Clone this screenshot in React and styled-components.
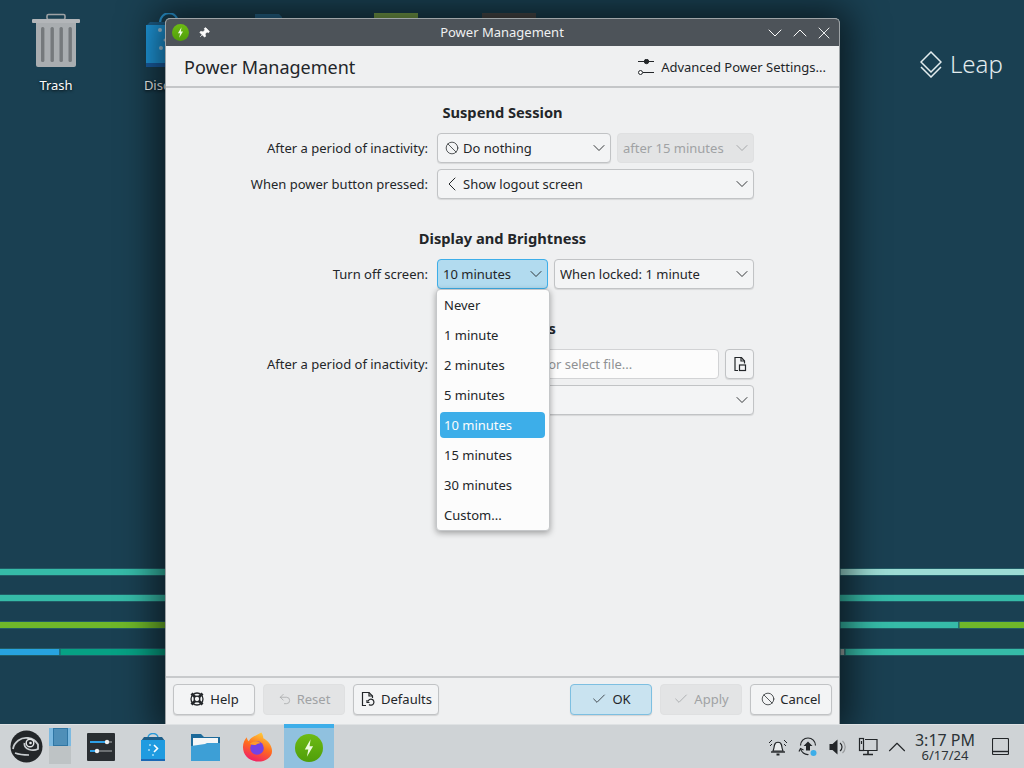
import React from "react";
import styled, { createGlobalStyle } from "styled-components";
import { Ban, Check, ChevronDown, ChevronLeft, ChevronUp, Undo2, X, Pin } from "lucide-react";

const Global = createGlobalStyle`
  html, body { margin: 0; padding: 0; width: 1024px; height: 768px; overflow: hidden; }
  body { font-family: "Noto Sans", sans-serif; font-size: 13px; color: #232629; }
  * { box-sizing: border-box; }
`;

const Screen = styled.div`
  width: 1024px; height: 768px; display: flex; flex-direction: column; overflow: hidden;
`;
const Desktop = styled.div`
  position: relative; flex: 1; background: #1a4052; overflow: hidden;
`;
const Wallpaper = styled.svg`
  position: absolute; left: 0; top: 0;
`;
const DeskIcon = styled.div`
  position: absolute; left: ${p => p.$x}px; top: ${p => p.$y}px; width: 90px;
  display: flex; flex-direction: column; align-items: center;
`;
const DeskLabel = styled.span`
  color: #fcfcfc; font-size: 13px; line-height: 18px; margin-top: 7px;
  text-shadow: 0 1px 3px rgba(0,0,0,.9);
`;
const LeapBrand = styled.div`
  position: absolute; left: 920px; top: 48px; display: flex; align-items: center; gap: 8px;
  color: #e3ecee; font-size: 24px; line-height: 32px; font-weight: 300;
`;
const Window = styled.div`
  position: absolute; left: 165px; top: 18px; width: 675px; height: 706px;
  display: flex; flex-direction: column; background: #eff0f1;
  border: 1px solid #9ea3a6; border-bottom: 0; border-radius: 5px 5px 0 0;
  box-shadow: 0 0 36px 10px rgba(0,0,0,.58);
`;
const TitleBar = styled.div`
  height: 27px; flex: none; background: #4d5359; color: #eff0f1; display: flex; align-items: center;
  padding: 0 5px 0 6px; position: relative; border-radius: 4px 4px 0 0;
`;
const TitleText = styled.div`
  position: absolute; left: 0; right: 0; text-align: center; font-size: 13px; line-height: 27px; padding-right: 1px;
`;
const TitleLeft = styled.div`
  display: flex; align-items: center; gap: 9px;
`;
const TitleRight = styled.div`
  margin-left: auto; display: flex; align-items: center; gap: 1px; color: #fcfcfc; position: relative;
`;
const CloseIcon = styled(X)`
  margin-left: 1px;
`;
const Header = styled.div`
  height: 42px; flex: none; display: flex; align-items: center; justify-content: space-between;
  padding: 2px 13px 0 18px; border-bottom: 2px solid #c4c6c8;
`;
const PageTitle = styled.h1`
  margin: 0; font-size: 18px; font-weight: 400; color: #232629; line-height: 24px;
`;
const Advanced = styled.div`
  display: flex; align-items: center; gap: 7px; font-size: 13px; color: #232629;
`;
const Body = styled.div`
  flex: 1; padding-top: 14px; position: relative;
`;
const Section = styled.section`
  display: flex; flex-direction: column; gap: 6px; margin-bottom: 29px;
`;
const Heading = styled.h2`
  margin: 0 0 5px; font-size: 14.67px; font-weight: 700; text-align: center; line-height: 20px; color: #232629;
`;
const Row = styled.div`
  display: grid; grid-template-columns: 262px 317px; column-gap: 9px; align-items: center; height: 30px;
`;
const Label = styled.div`
  text-align: right; line-height: 30px; color: #232629;
`;
const Fields = styled.div`
  display: flex; gap: 6px; min-width: 0;
`;
const Combo = styled.div`
  height: 30px; flex: ${p => p.$w ? `0 0 ${p.$w}px` : 1}; display: flex; align-items: center; gap: 4px; padding: 0 1px 0 ${p => p.$pl ?? 7}px;
  border-radius: 4px;
  border: 1px solid ${p => p.$active ? "#3daee9" : p.$off ? "#dfe0e1" : "#c1c3c5"};
  background: ${p => p.$active ? "#b2dbef" : p.$off ? "#e3e4e5" : "#f3f4f5"};
  color: ${p => p.$off ? "#a0a2a4" : "#232629"};
  box-shadow: ${p => p.$off ? "none" : "0 1px 1px rgba(0,0,0,.1)"};
`;
const ComboText = styled.span`
  flex: 1; white-space: nowrap; overflow: hidden; line-height: 18px;
`;
const LeadChevron = styled(ChevronLeft)`
  margin: 0 -5px; flex: none;
`;
const TextInput = styled.div`
  height: 30px; flex: 1; border: 1px solid #d2d3d5; background: #fcfcfc; border-radius: 4px;
  display: flex; align-items: center; padding-left: 9px; color: #8f9193;
`;
const SquareButton = styled.div`
  width: 29px; height: 30px; flex: none; border: 1px solid #c1c3c5; border-radius: 4px; background: #f3f4f5;
  display: flex; align-items: center; justify-content: center; box-shadow: 0 1px 1px rgba(0,0,0,.1);
`;
const Menu = styled.div`
  position: absolute; left: 270px; top: 201px; width: 114px; height: 242px; background: #fcfcfc;
  border: 1px solid #c5c7c9; border-radius: 4px; box-shadow: 0 2px 6px rgba(0,0,0,.35);
  display: flex; flex-direction: column;
`;
const MenuItem = styled.div`
  height: 30px; flex: none; display: flex; align-items: center; padding: 2px 4px 2px 3px;
`;
const MenuInner = styled.div`
  flex: 1; height: 26px; border-radius: 4px; padding-left: 4px; line-height: 26px;
  background: ${p => p.$on ? "#3daee9" : "transparent"};
  color: ${p => p.$on ? "#fcfcfc" : "#232629"};
`;
const Footer = styled.div`
  height: 48px; flex: none; border-top: 2px solid #c8cacc; display: flex; align-items: center;
  justify-content: space-between; padding: 0 7px 4px;
`;
const ButtonGroup = styled.div`
  display: flex; gap: 8px;
`;
const Btn = styled.div`
  height: 31px; width: ${p => p.$w ?? 82}px; display: flex; align-items: center; justify-content: center; gap: 5px;
  border-radius: 4px;
  border: 1px solid ${p => p.$primary ? "#7dbfe1" : p.$off ? "#dfe0e1" : "#c1c3c5"};
  background: ${p => p.$primary ? "#c9e3f0" : p.$off ? "#e3e4e5" : "#f3f4f5"};
  color: ${p => p.$off ? "#a0a2a4" : "#232629"};
  box-shadow: ${p => p.$off ? "none" : "0 1px 1px rgba(0,0,0,.12)"};
`;
const Panel = styled.div`
  height: 44px; flex: none; background: #cfd3d6; border-top: 1px solid #dfe2e4; display: flex; align-items: stretch; position: relative;
`;
const Launcher = styled.div`
  width: 49px; display: flex; align-items: center; justify-content: center; padding-left: 4px;
`;
const Pager = styled.div`
  width: 22px; margin: 3px 0 4px; display: flex; flex-direction: column;
`;
const PagerDesk = styled.div`
  flex: 1; display: flex; justify-content: center;
  background: ${p => p.$on ? "#7cb9e0" : "#bec3c5"};
`;
const PagerWin = styled.div`
  width: 15px; height: 100%; background: #4f8fb8; border: 1px solid #2f76a4;
`;
const Tasks = styled.div`
  display: flex; margin-left: 4px;
`;
const Task = styled.div`
  width: ${p => p.$on ? 50 : 52}px; display: flex; align-items: center; justify-content: center;
  background: ${p => p.$on ? "#90c1df" : "transparent"};
  border-top: ${p => p.$on ? "4px solid #3daee9" : "0"};
  margin: ${p => p.$on ? "-1px 0 0 1px" : "0"};
`;
const Tray = styled.div`
  margin-left: auto; display: flex; align-items: center; color: #232629;
`;
const TrayIcon = styled.div`
  width: ${p => p.$w ?? 30}px; height: 30px; display: flex; align-items: center; justify-content: center; margin-right: ${p => p.$mr ?? 0}px;
`;
const Clock = styled.div`
  width: 68px; margin: 1px 6px 0 0; display: flex; flex-direction: column; align-items: center; color: #2d3338;
`;
const ClockTime = styled.span`
  font-size: 16px; line-height: 16px; white-space: nowrap;
`;
const ClockDate = styled.span`
  font-size: 13px; line-height: 14px; white-space: nowrap;
`;

const Chev = ({ color = "#232629" }) => <ChevronDown size={20} strokeWidth={1.1} color={color} style={{ flex: "none" }} />;

const PowerIcon = ({ size = 24, id }) => (
  <svg width={size} height={size} viewBox="0 0 24 24">
    <defs>
      <linearGradient id={id} x1="0" y1="0" x2="0" y2="1">
        <stop offset="0" stopColor="#6dbb14" />
        <stop offset="1" stopColor="#4f9e0a" />
      </linearGradient>
    </defs>
    <circle cx="12" cy="12" r="12" fill={`url(#${id})`} />
    <path d="M13.4 4.5 8.4 13.2h3l-1.2 6.3 5.3-9h-3z" fill="#eefbe0" />
  </svg>
);

const TrashIcon = () => (
  <svg width="50" height="56" viewBox="-1 0 50 56">
    <rect x="15" y="1.500" width="18" height="5" rx="1.500" fill="none" stroke="#9ea2a5" strokeWidth="1.600" />
    <rect x="0" y="6" width="48" height="4" rx="1" fill="#b3b6b9" />
    <path d="M4 10h40v42a2 2 0 0 1-2 2H6a2 2 0 0 1-2-2z" fill="#a9adb0" />
    {[9, 18.500, 27.500, 36.500].map(x => <rect key={x} x={x} y="14" width="3.400" height="35" rx="1.500" fill="#75797c" />)}
  </svg>
);

const DiscoverDesk = () => (
  <svg width="50" height="56" viewBox="0 0 50 56">
    <path d="M15 10C15-3 33-3 33 10" fill="none" stroke="#2a9ad8" strokeWidth="2" />
    <path d="M5 9h40l4 4H1z" fill="#1d5f8a" />
    <path d="M1 12h48v38H1z" fill="#1f9be0" />
    <rect x="1" y="50" width="48" height="4" fill="#1a5fa5" />
    <circle cx="15" cy="17" r="2" fill="#a8cfe6" />
    <circle cx="16" cy="35" r="2" fill="#a8cfe6" />
    <circle cx="20" cy="27" r="1.500" fill="#a8cfe6" />
  </svg>
);

const SlidersIcon = () => (
  <svg width="16" height="16" viewBox="0 0 16 16" fill="none" stroke="#232629">
    <path d="M0 2.500h16M5 13.500h11" />
    <circle cx="8.500" cy="2.500" r="2.200" fill="#232629" />
    <circle cx="2.500" cy="13.500" r="2" fill="#fcfcfc" />
  </svg>
);

const DiamondLogo = () => (
  <svg width="22" height="27" viewBox="0 0 22 27" fill="none" stroke="#e3ecee" strokeWidth="1.500">
    <path d="M11 1 21 11 11 21 1 11z" />
    <path d="M1 16 11 26 21 16" />
  </svg>
);

const HelpIcon = () => (
  <svg width="16" height="16" viewBox="0 0 16 16" fill="none" stroke="#232629" strokeWidth="1.300">
    <circle cx="8" cy="8" r="6" />
    <circle cx="8" cy="8" r="2.800" />
    <path d="M2.500 2.500 6 6M13.500 2.500 10 6M2.500 13.500 6 10M13.500 13.500 10 10" strokeWidth="2.800" />
  </svg>
);

const DefaultsIcon = () => (
  <svg width="16" height="16" viewBox="0 0 16 16" fill="none" stroke="#232629" strokeWidth="1.200">
    <path d="M6 14.500H2.500v-13H9L12.500 5v2" />
    <path d="M9 1.500V5h3.500" />
    <path d="M8 10.500a3 3 0 1 1 1 3" />
    <path d="M7 9v2.500h2.500" />
  </svg>
);

const FileIcon = () => (
  <svg width="16" height="16" viewBox="0 0 16 16" fill="none" stroke="#232629" strokeWidth="1.200">
    <path d="M6 14.500H3v-13h6.500L12.500 5v2.500" />
    <path d="M9 1.500V5h3.500" />
    <rect x="7.500" y="9" width="6" height="5.500" />
  </svg>
);

const GeekoIcon = () => (
  <svg width="33" height="33" viewBox="0 0 33 33">
    <circle cx="16.500" cy="16.500" r="16" fill="#232629" />
    <path d="M3 19C4 12 11 7 18 8c4 .6 8 3 10 6.500V19c-3 1.500-6 1.500-9 .5-3-1-5-3.500-4.500-6.500" fill="none" stroke="#c9cdd0" strokeWidth="1.800" />
    <circle cx="20" cy="13" r="3.800" fill="none" stroke="#e4e6e8" strokeWidth="1.400" />
    <circle cx="20.500" cy="13" r="1.300" fill="#e4e6e8" />
    <path d="M5 23c4 1.500 9 2 14 2" stroke="#c9cdd0" strokeWidth="1.500" fill="none" />
  </svg>
);

const SettingsApp = () => (
  <svg width="28" height="28" viewBox="0 0 28 28">
    <rect width="28" height="28" rx="1" fill="#2a2e32" />
    <rect x="3" y="8" width="22" height="2" fill="#6b6f72" />
    <rect x="3" y="8" width="17" height="2" fill="#2ea0e6" />
    <circle cx="20" cy="9" r="2.200" fill="#eff0f1" />
    <rect x="3" y="17" width="22" height="2" fill="#6b6f72" />
    <rect x="3" y="17" width="7" height="2" fill="#2ea0e6" />
    <circle cx="10" cy="18" r="2.200" fill="#eff0f1" />
  </svg>
);

const DiscoverApp = () => (
  <svg width="24" height="28" viewBox="0 0 24 28">
    <path d="M7 5C7-1 17-1 17 5" fill="none" stroke="#2a9ad8" strokeWidth="1.500" />
    <path d="M3 4h18l3 4H0z" fill="#1d5f8a" />
    <rect y="7" width="24" height="19" fill="#1f9be0" />
    <rect y="26" width="24" height="2" fill="#1a68b5" />
    <path d="M13 12l3.500 3.500L13 19" stroke="#fff" strokeWidth="1.600" fill="none" />
    <circle cx="9" cy="12" r="1" fill="#a8dcf7" /><circle cx="8" cy="17" r="1" fill="#a8dcf7" />
    <circle cx="12" cy="22" r="1" fill="#a8dcf7" />
  </svg>
);

const FolderApp = () => (
  <svg width="29" height="28" viewBox="0 0 29 28">
    <path d="M0 1h10l3 3h16v24H0z" fill="#1d6a9a" />
    <rect x="2" y="5" width="25" height="8" fill="#f4f6f7" />
    <path d="M0 13l14-2 2-1h13v18H0z" fill="#3d9fd6" />
  </svg>
);

const FirefoxApp = () => (
  <svg width="31" height="32" viewBox="0 0 32 32">
    <defs>
      <linearGradient id="ff" x1="0.7" y1="0" x2="0.3" y2="1">
        <stop offset="0" stopColor="#ffd13a" />
        <stop offset=".5" stopColor="#ff6a1f" />
        <stop offset="1" stopColor="#f01a6a" />
      </linearGradient>
    </defs>
    <path d="M20 1c2 3 2 5 2 6 4 2 9 7 9 13 0 7-7 11-14 11C8 31 1 25 1 16 1 12 3 8 5 6c0 2 1 3 2 4 2-4 8-6 13-9z" fill="url(#ff)" />
    <circle cx="15.500" cy="17" r="7" fill="#7542e5" />
    <path d="M8 13c3-3 8-4 11-1-2 0-4 1-5 2-2 0-4 0-6-1z" fill="#ff9a2c" />
  </svg>
);

const AlarmBell = () => (
  <svg width="20" height="20" viewBox="0 0 20 20" fill="none" stroke="#232629" strokeWidth="1.200">
    <path d="M5 14c1-2 1-4 1.500-6a3.600 3.600 0 0 1 7 0c.5 2 .5 4 1.500 6z" fill="#e9ebec" />
    <path d="M3 15h14" strokeWidth="1.400" />
    <path d="M8.500 17.500h3" strokeWidth="2" />
    <path d="M4 3 1 6M16 3l3 3M4 7 2 9M16 7l2 2" strokeWidth="1" />
  </svg>
);

const UpdateIcon = () => (
  <svg width="20" height="20" viewBox="0 0 20 20" fill="none" stroke="#232629" strokeWidth="1.200">
    <path d="M2.500 8.500a7.500 7.500 0 0 1 15 0" />
    <path d="M2.500 11.500a7.500 7.500 0 0 0 8 6" />
    <path d="M1 14.500l1.500-3 3 1.500" />
    <path d="M10 4.500l4.500 4.500H12v4.500H8V9H5.500z" fill="#232629" stroke="none" />
    <circle cx="15.500" cy="16" r="3" fill="#3daee9" stroke="none" />
  </svg>
);

const VolumeIcon = () => (
  <svg width="20" height="20" viewBox="0 0 20 20" fill="none">
    <path d="M1.500 7H4.500L9.500 2.500v15L4.500 13H1.500z" fill="#232629" />
    <path d="M12 6a5 5 0 0 1 0 8" stroke="#232629" strokeWidth="1.200" />
    <path d="M14.500 4a8 8 0 0 1 0 12" stroke="#9a9d9f" strokeWidth="1.200" />
  </svg>
);

const NetworkIcon = () => (
  <svg width="20" height="20" viewBox="0 0 20 20" fill="none" stroke="#232629" strokeWidth="1.200">
    <path d="M7 2.500h12v11H5" />
    <rect x="1.500" y="1.500" width="4" height="12" />
    <path d="M3.500 4v3" />
    <path d="M5 17.500h10M10 14v3.500" strokeWidth="1.600" />
  </svg>
);

const ShowDesktop = () => (
  <svg width="17" height="17" viewBox="0 0 17 17" fill="none" stroke="#232629" strokeWidth="1.100">
    <rect x=".5" y=".5" width="16" height="16" rx="1" />
    <path d="M.5 13.500h16" strokeWidth="1.400" />
  </svg>
);

const PinIcon = () => <Pin size={12} color="#fcfcfc" fill="#fcfcfc" strokeWidth={1.4} style={{ transform: "rotate(45deg)" }} />;

const items = ["Never", "1 minute", "2 minutes", "5 minutes", "10 minutes", "15 minutes", "30 minutes", "Custom..."];

export default function App() {
  return (
    <Screen>
      <Global />
      <Desktop>
        <Wallpaper width="1024" height="724">
          <g stroke="#215c66" strokeWidth="1">
            <rect x="-1" y="568.500" width="842" height="7" fill="#36bba8" />
            <rect x="840" y="568.500" width="186" height="7" fill="#9ddcd4" />
            <rect x="-1" y="594.500" width="1026" height="7" fill="#36bba8" />
            <rect x="-1" y="621.500" width="842" height="7" fill="#6fb82a" />
            <rect x="840" y="621.500" width="119" height="7" fill="#36bba8" />
            <rect x="959" y="621.500" width="66" height="7" fill="#6fb82a" />
            <rect x="-1" y="648.500" width="61" height="7" fill="#27a3e0" />
            <rect x="60" y="648.500" width="781" height="7" fill="#06a184" />
            <rect x="840" y="648.500" width="5" height="7" fill="#9ba9a8" />
            <rect x="845" y="648.500" width="180" height="7" fill="#36bba8" />
          </g>
          <path d="M255 18V14h24l3 3v1z" fill="#26688e" />
          <rect x="374" y="13" width="44" height="5" fill="#7aa44c" />
          <rect x="482" y="13" width="54" height="5" fill="#4a4a4a" />
        </Wallpaper>
        <DeskIcon $x={11} $y={13}>
          <TrashIcon />
          <DeskLabel>Trash</DeskLabel>
        </DeskIcon>
        <DeskIcon $x={125} $y={13}>
          <DiscoverDesk />
          <DeskLabel>Discover</DeskLabel>
        </DeskIcon>
        <LeapBrand>
          <DiamondLogo />
          Leap
        </LeapBrand>
        <Window>
          <TitleBar>
            <TitleText>Power Management</TitleText>
            <TitleLeft>
              <PowerIcon size={17} id="pw-title" />
              <PinIcon />
            </TitleLeft>
            <TitleRight>
              <ChevronDown size={24} strokeWidth={1} />
              <ChevronUp size={24} strokeWidth={1} />
              <CloseIcon size={20} strokeWidth={1.1} />
            </TitleRight>
          </TitleBar>
          <Header>
            <PageTitle>Power Management</PageTitle>
            <Advanced>
              <SlidersIcon />
              Advanced Power Settings...
            </Advanced>
          </Header>
          <Body>
            <Section>
              <Heading>Suspend Session</Heading>
              <Row>
                <Label>After a period of inactivity:</Label>
                <Fields>
                  <Combo $w={174}>
                    <Ban size={14} strokeWidth={1.3} />
                    <ComboText>Do nothing</ComboText>
                    <Chev />
                  </Combo>
                  <Combo $off $pl={5}>
                    <ComboText>after 15 minutes</ComboText>
                    <Chev color="#a0a2a4" />
                  </Combo>
                </Fields>
              </Row>
              <Row>
                <Label>When power button pressed:</Label>
                <Fields>
                  <Combo>
                    <LeadChevron size={24} strokeWidth={1} />
                    <ComboText>Show logout screen</ComboText>
                    <Chev />
                  </Combo>
                </Fields>
              </Row>
            </Section>
            <Section>
              <Heading>Display and Brightness</Heading>
              <Row>
                <Label>Turn off screen:</Label>
                <Fields>
                  <Combo $w={111} $active $pl={5}>
                    <ComboText>10 minutes</ComboText>
                    <Chev />
                  </Combo>
                  <Combo $pl={5}>
                    <ComboText>When locked: 1 minute</ComboText>
                    <Chev />
                  </Combo>
                </Fields>
              </Row>
            </Section>
            <Section>
              <Heading>Other Settings</Heading>
              <Row>
                <Label>After a period of inactivity:</Label>
                <Fields>
                  <TextInput>Enter command or select file...</TextInput>
                  <SquareButton><FileIcon /></SquareButton>
                </Fields>
              </Row>
              <Row>
                <Label />
                <Fields>
                  <Combo>
                    <ComboText>Run script</ComboText>
                    <Chev />
                  </Combo>
                </Fields>
              </Row>
            </Section>
            <Menu>
              {items.map(t => (
                <MenuItem key={t}>
                  <MenuInner $on={t === "10 minutes"}>{t}</MenuInner>
                </MenuItem>
              ))}
            </Menu>
          </Body>
          <Footer>
            <ButtonGroup>
              <Btn><HelpIcon />Help</Btn>
              <Btn $off><Undo2 size={14} strokeWidth={1.2} />Reset</Btn>
              <Btn $w={86}><DefaultsIcon />Defaults</Btn>
            </ButtonGroup>
            <ButtonGroup>
              <Btn $primary><Check size={16} strokeWidth={1.2} />OK</Btn>
              <Btn $off><Check size={16} strokeWidth={1.2} />Apply</Btn>
              <Btn><Ban size={14} strokeWidth={1.3} />Cancel</Btn>
            </ButtonGroup>
          </Footer>
        </Window>
      </Desktop>
      <Panel>
        <Launcher><GeekoIcon /></Launcher>
        <Pager>
          <PagerDesk $on><PagerWin /></PagerDesk>
          <PagerDesk />
        </Pager>
        <Tasks>
          <Task><SettingsApp /></Task>
          <Task><DiscoverApp /></Task>
          <Task><FolderApp /></Task>
          <Task><FirefoxApp /></Task>
          <Task $on><PowerIcon size={28} id="pw-task" /></Task>
        </Tasks>
        <Tray>
          <TrayIcon><AlarmBell /></TrayIcon>
          <TrayIcon><UpdateIcon /></TrayIcon>
          <TrayIcon><VolumeIcon /></TrayIcon>
          <TrayIcon><NetworkIcon /></TrayIcon>
          <TrayIcon $w={28}><ChevronUp size={30} strokeWidth={0.9} style={{ flex: "none" }} /></TrayIcon>
          <Clock>
            <ClockTime>3:17 PM</ClockTime>
            <ClockDate>6/17/24</ClockDate>
          </Clock>
          <TrayIcon $mr={9}><ShowDesktop /></TrayIcon>
        </Tray>
      </Panel>
    </Screen>
  );
}
